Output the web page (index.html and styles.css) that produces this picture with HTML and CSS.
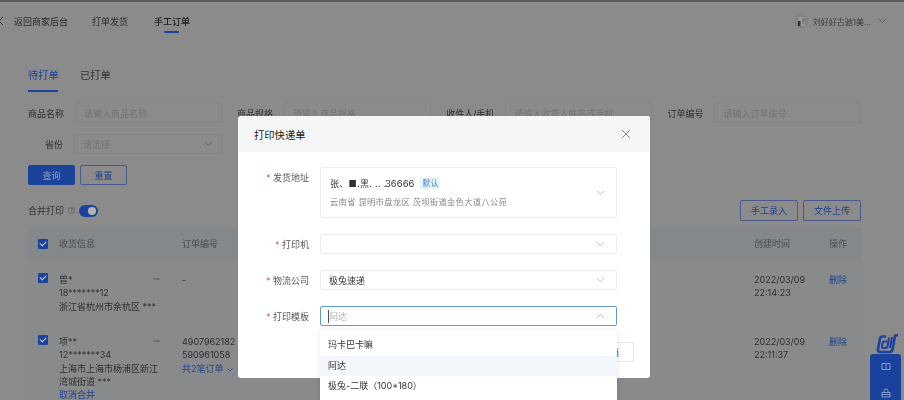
FILE: index.html
```html
<!DOCTYPE html>
<html lang="zh-CN">
  <head>
    <meta charset="UTF-8" />
    <title>手工订单</title>
    <link rel="stylesheet" href="styles.css">
  </head>
  <body>
    <div class="page">
      <header class="topbar">
        <svg class="back" width="6" height="10" viewBox="0 0 6 10"><path d="M5 1 1 5l4 4" fill="none" stroke="#333" stroke-width="1"/></svg>
        <a class="nav-back">返回商家后台</a>
        <a class="nav-item">打单发货</a>
        <a class="nav-item active">手工订单</a>
        <div class="user">
          <svg class="avatar" width="15" height="15" viewBox="0 0 15 15"><circle cx="7.500" cy="7.500" r="7" fill="#838383"/><path d="M4 3h7v9H4z" fill="#9a9a9a"/><path d="M4 7h2.500v5H4z" fill="#2f2f2f"/><path d="M8 5h3M8 7h3M8 9h2" stroke="#555" stroke-width=".8"/></svg>
          <span>刘好好古驰1美...</span>
          <svg class="chev" width="9" height="6" viewBox="0 0 9 6"><path d="M1 1l3.500 3.500L8 1" fill="none" stroke="#555" stroke-width=".8"/></svg>
        </div>
      </header>

      <main class="content">
        <div class="tabs">
          <span class="tab active">待打单</span>
          <span class="tab">已打单</span>
        </div>

        <div class="filter">
          <label class="lbl">商品名称</label><span class="input">请输入商品名称</span>
          <label class="lbl">商品规格</label><span class="input">请输入商品规格</span>
          <label class="lbl">收件人/手机</label><span class="input">请输入收货人姓名或手机</span>
          <label class="lbl">订单编号</label><span class="input">请输入订单编号</span>
        </div>
        <div class="filter second">
          <label class="lbl">省份</label>
          <span class="input">请选择
            <svg class="chev push" width="9" height="6" viewBox="0 0 9 6"><path d="M1 1l3.500 3.500L8 1" fill="none" stroke="#5a5a5a" stroke-width=".8"/></svg>
          </span>
        </div>
        <div class="btns">
          <button class="btn primary">查询</button>
          <button class="btn ghost">重置</button>
        </div>

        <div class="toolbar">
          <span>合并打印</span>
          <span class="help">?</span>
          <span class="toggle"><i></i></span>
          <div class="tool-right">
            <button class="btn ghost wide">手工录入</button>
            <button class="btn ghost wide">文件上传</button>
          </div>
        </div>

        <div class="table">
          <div class="row head">
            <div class="c-check"><span class="check"></span></div>
            <div class="c-info">收货信息</div>
            <div class="c-no">订单编号</div>
            <div class="c-time">创建时间</div>
            <div class="c-op">操作</div>
          </div>
          <div class="row one">
            <div class="c-check"><span class="check"></span></div>
            <div class="c-info">曾*<br>18*******12<br>浙江省杭州市余杭区 ***<i class="tilde"></i></div>
            <div class="c-no">-</div>
            <div class="c-time">2022/03/09<br>22:14:23</div>
            <div class="c-op"><a>删除</a></div>
          </div>
          <div class="row two">
            <div class="c-check"><span class="check"></span></div>
            <div class="c-info">项**<br>12*******34<br>上海市上海市杨浦区新江<br>湾城街道 ***<br><a>取消合并</a><i class="tilde"></i></div>
            <div class="c-no">4907962182<br>590961058<br><a>共2笔订单</a>
              <svg class="more" width="6" height="4" viewBox="0 0 6 4"><path d="M.5.500 3 3 5.500.500" fill="none" stroke="#22448f" stroke-width=".8"/></svg>
            </div>
            <div class="c-time">2022/03/09<br>22:11:37</div>
            <div class="c-op"><a>删除</a></div>
          </div>
        </div>
      </main>

      <div class="float">
        <svg class="float-logo" width="22" height="21" viewBox="0 0 22 21"><path d="M10 2.500H6.500Q4.500 2.500 4 4.500L2 15q-.5 3 2 3h10q2 0 2.500-2.500L19 1.800L22 1.200" fill="none" stroke="#1a429c" stroke-width="2.600"/><path d="M11 7.500H8.500q-1.500 0-2 1.500L6 12q-.3 2 1.500 2h2q1.500 0 2-1.500L13 3.500M16 3l-2 11" fill="none" stroke="#1a429c" stroke-width="2"/></svg>
        <div class="float-panel">
          <svg width="10" height="10" viewBox="0 0 10 10"><path d="M1 1.500h3.500L5 2l.5-.5H9v6H5.500L5 8l-.5-.5H1zM5 2v6" fill="none" stroke="#9fb0d6" stroke-width=".8"/></svg>
          <svg width="10" height="10" viewBox="0 0 10 10"><path d="M3 4V2.500Q3 1 5 1t2 1.500V4M1 4.500h8V9H1zM1 6.500h8" fill="none" stroke="#9fb0d6" stroke-width=".8"/></svg>
        </div>
      </div>
    </div>

    <div class="modal">
      <div class="modal-head">
        <span>打印快递单</span>
        <svg width="10" height="10" viewBox="0 0 10 10"><path d="M1 1l8 8M9 1 1 9" stroke="#8a8a8a" stroke-width="1"/></svg>
      </div>
      <div class="modal-body">
        <div class="field addr-field">
          <label class="req">发货地址</label>
          <div class="box addr">
            <div class="addr-text">
              <div class="addr-line"><span class="smear name">张、■.黑. .. .</span><span class="phone">36666</span><em class="tag">默认</em></div>
              <div class="addr-sub smear">云南省 昆明市盘龙区 茨坝街道金色大道八公苑</div>
            </div>
            <svg class="chev" width="9" height="6" viewBox="0 0 9 6"><path d="M1 1l3.500 3.500L8 1" fill="none" stroke="#b5b5b5" stroke-width=".8"/></svg>
          </div>
        </div>
        <div class="field">
          <label class="req">打印机</label>
          <div class="box">
            <span></span>
            <svg class="chev" width="9" height="6" viewBox="0 0 9 6"><path d="M1 1l3.500 3.500L8 1" fill="none" stroke="#b5b5b5" stroke-width=".8"/></svg>
          </div>
        </div>
        <div class="field">
          <label class="req">物流公司</label>
          <div class="box">
            <span>极兔速递</span>
            <svg class="chev" width="9" height="6" viewBox="0 0 9 6"><path d="M1 1l3.500 3.500L8 1" fill="none" stroke="#b5b5b5" stroke-width=".8"/></svg>
          </div>
        </div>
        <div class="field">
          <label class="req">打印模板</label>
          <div class="box focus">
            <span class="placeholder">阿达</span>
            <svg class="chev" width="9" height="6" viewBox="0 0 9 6"><path d="M1 5l3.500-3.500L8 5" fill="none" stroke="#aaa" stroke-width=".8"/></svg>
          </div>
        </div>
      </div>
      <button class="cancel">取消</button>
    </div>

    <ul class="dropdown">
      <li>玛卡巴卡嘛</li>
      <li class="hover">阿达</li>
      <li>极兔-二联（100*180）</li>
    </ul>
  </body>
</html>
```

FILE: styles.css
```css
* {
  box-sizing: border-box;
}
html,
body {
  margin: 0;
  height: 400px;
  overflow: hidden;
}
body {
  position: relative;
  background: #8b8b8b;
  color: #2a2a2a;
  font-family: Inter, "Noto Sans CJK SC", sans-serif;
  font-size: 9px;
}

/* 背景页面 (遮罩下已变暗) */
.page {
  height: 400px;
  filter: blur(0.45px);
}
.topbar {
  display: flex;
  align-items: center;
  height: 42px;
  padding: 0 0 0 14px;
  border-top: 2px solid #5a5a5a;
  position: relative;
  color: #2b2b2b;
}
.back {
  position: absolute;
  left: -2px;
  top: 14px;
}
.nav-back {
  margin-right: 24px;
  margin-top: 2px;
  align-self: flex-start;
  line-height: 36px;
}
.nav-item {
  margin-right: 26px;
  height: 40px;
  line-height: 40px;
  position: relative;
  align-self: flex-start;
}
.nav-item.active {
  color: #1c1c1c;
  font-weight: 500;
}
.nav-item.active::after {
  content: "";
  position: absolute;
  left: 10px;
  top: 29px;
  width: 15px;
  height: 2px;
  border-radius: 1px;
  background: #1b4099;
}
.user {
  margin-left: auto;
  margin-right: 17px;
  margin-top: -2px;
  display: flex;
  align-items: center;
  gap: 4px;
  font-size: 8px;
  color: #3a3a3a;
}
.user .chev {
  margin-left: 3px;
}

.content {
  padding: 0 43px 0 28px;
}
.tabs {
  display: flex;
  gap: 22px;
  height: 50px;
  padding-top: 26px;
}
.tab {
  width: 30px;
  height: 24px;
  white-space: nowrap;
  color: #333;
  font-size: 10.300px;
  line-height: 15px;
}
.tab.active {
  color: #1c429a;
  border-bottom: 2px solid #1c429a;
}
.filter {
  display: flex;
  align-items: center;
  height: 20px;
  margin-top: 11px;
}
.lbl {
  margin-left: 15.500px;
  margin-right: 11px;
  color: #2f2f2f;
  white-space: nowrap;
}
.lbl:first-child {
  margin-left: 0;
}
.input {
  display: flex;
  align-items: center;
  width: 147.500px;
  height: 20px;
  padding: 0 8px;
  border: 1px solid #858585;
  border-radius: 2px;
  color: #747474;
}
.second .lbl {
  width: 35px;
  text-align: right;
}
.push {
  margin-left: auto;
}
.btns {
  display: flex;
  gap: 5px;
  margin-top: 11px;
}
.btn {
  height: 20px;
  width: 47px;
  padding: 0;
  border-radius: 2px;
  font: inherit;
}
.primary {
  background: #1b439c;
  border: 1px solid #1b439c;
  color: #8fa0c8;
}
.ghost {
  background: transparent;
  border: 1px solid #49598a;
  color: #22408c;
}
.wide {
  width: 58px;
  height: 21px;
}
.toolbar {
  display: flex;
  align-items: center;
  height: 21px;
  margin-top: 15px;
  color: #333;
}
.help {
  width: 7px;
  height: 7px;
  margin: 0 4px;
  border: 1px solid #666;
  border-radius: 50%;
  font-size: 5px;
  line-height: 5px;
  text-align: center;
  color: #555;
}
.toggle {
  display: flex;
  justify-content: flex-end;
  width: 19px;
  height: 12px;
  padding: 2px;
  border-radius: 6px;
  background: #1b439c;
}
.toggle i {
  width: 8px;
  height: 8px;
  border-radius: 50%;
  background: #b4b4b4;
}
.tool-right {
  display: flex;
  gap: 5px;
  margin-left: auto;
}

.table {
  margin-top: 7px;
}
.row {
  display: flex;
  line-height: 13.300px;
  color: #2e2e2e;
  background: #888a8c;
  border-bottom: 1px solid #86888a;
}
.head {
  height: 32px;
  align-items: center;
  background: #85888b;
  color: #4b4b4b;
}
.one {
  height: 63px;
  padding-top: 13px;
}
.two {
  height: 90px;
  padding-top: 12px;
}
.row a {
  color: #22448f;
}
.more {
  margin-left: 1px;
}
.c-check {
  width: 31px;
  padding-left: 10px;
  flex: none;
}
.check {
  display: block;
  width: 10px;
  height: 10px;
  border-radius: 1px;
  background: #1b439c;
  position: relative;
}
.check::after {
  content: "";
  position: absolute;
  left: 2px;
  top: 2px;
  width: 5px;
  height: 3px;
  border-left: 1px solid #c6cfe4;
  border-bottom: 1px solid #c6cfe4;
  transform: rotate(-45deg);
}
.c-info {
  width: 123px;
  flex: none;
  white-space: nowrap;
  position: relative;
}
.tilde {
  position: absolute;
  left: 94px;
  top: 5px;
  width: 7px;
  height: 1.500px;
  background: #6f6f6f;
  border-radius: 1px;
}
.c-no {
  width: 572px;
  flex: none;
  white-space: nowrap;
}
.c-time {
  width: 75px;
  flex: none;
}
.c-op {
  flex: none;
  white-space: nowrap;
}

.float {
  position: absolute;
  left: 870px;
  top: 334px;
  width: 31px;
}
.float-logo {
  display: block;
  margin-left: 6px;
}
.float-panel {
  display: flex;
  flex-direction: column;
  align-items: center;
  gap: 16px;
  height: 50px;
  padding-top: 8px;
  margin-top: -1px;
  border-radius: 3px;
  background: #1a429c;
}

/* 弹窗 */
.modal {
  position: absolute;
  left: 238px;
  top: 116px;
  width: 412px;
  height: 262px;
  border-radius: 3px;
  background: #fff;
  overflow: hidden;
  filter: blur(0.3px);
}
.modal-head {
  display: flex;
  align-items: center;
  justify-content: space-between;
  height: 36px;
  padding: 0 19px 0 16px;
  background: #f5f6f8;
  font-size: 10.300px;
  color: #222;
}
.modal-body {
  padding: 15px 33px 0 0;
}
.field {
  display: flex;
  align-items: center;
  margin-bottom: 16px;
  color: #555;
}
.addr-field {
  align-items: flex-start;
}
.addr-field label {
  margin-top: 4px;
}
.req {
  width: 71px;
  text-align: right;
  margin-right: 11px;
  flex: none;
}
.req::before {
  content: "* ";
  color: #d9546a;
}
.box {
  display: flex;
  align-items: center;
  justify-content: space-between;
  flex: 1;
  height: 20px;
  padding: 0 11px 0 8px;
  border: 1px solid #ececec;
  border-radius: 2px;
  color: #333;
}
.addr {
  height: 51px;
  padding-left: 9px;
}
.addr-text {
  display: flex;
  flex-direction: column;
  gap: 8px;
}
.addr-line {
  display: flex;
  align-items: center;
  height: 12px;
  white-space: pre;
}
.name {
  width: 55px;
}
.phone {
  font-size: 9.500px;
}
.tag {
  margin-left: 6px;
  padding: 0 2px;
  background: #e8f2fb;
  color: #4a7fc0;
  font-style: normal;
  font-size: 8px;
  line-height: 12px;
}
.smear {
  filter: blur(0.6px);
  letter-spacing: 0.3px;
}
.addr-sub {
  font-size: 8.300px;
  color: #888;
  line-height: 11px;
}
.focus {
  border-color: #5e9ad2;
}
.placeholder {
  color: #b5b5b5;
  border-left: 1px solid #555;
  margin-left: -1px;
}
.cancel {
  position: absolute;
  right: 16px;
  top: 226px;
  width: 60px;
  height: 20px;
  padding: 0 14px 0 0;
  background: #fff;
  border: 1px solid #e6e6e6;
  border-radius: 2px;
  font: inherit;
  color: #444;
  text-align: right;
}

.dropdown {
  position: absolute;
  left: 320px;
  top: 330px;
  width: 297px;
  height: 80px;
  margin: 0;
  padding: 5px 0;
  list-style: none;
  background: #fff;
  box-shadow: 0 1px 6px rgba(0, 0, 0, 0.1);
  color: #333;
  filter: blur(0.3px);
}
.dropdown li {
  height: 20.500px;
  line-height: 20.500px;
  padding: 0 8px;
}
.dropdown .hover {
  background: #f3f6fa;
}
```
